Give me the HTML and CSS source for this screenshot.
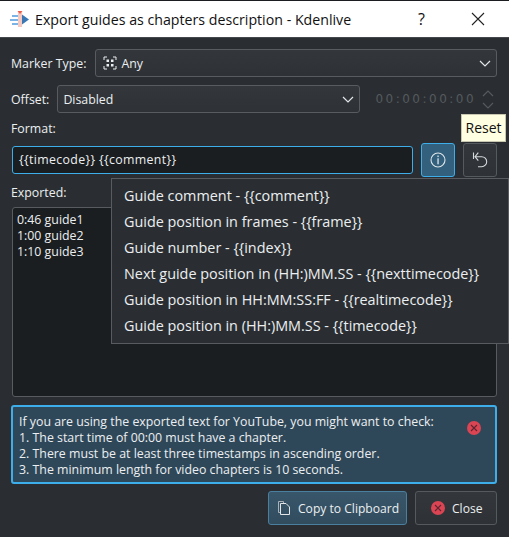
FILE: index.html
```html
<!DOCTYPE html>
<html lang="en">
<head>
    <meta charset="UTF-8">
    <meta name="viewport" content="width=device-width, initial-scale=1.0">
    <title>Export guides as chapters description - Kdenlive</title>
    <link rel="stylesheet" href="styles.css">
</head>
<body>
    <div class="window">
        <header class="titlebar">
            <svg class="app-icon" width="20" height="20" viewBox="0 0 20 20">
                <rect x="2" y="6" width="6" height="2" fill="#7db4e6"/>
                <rect x="0" y="10" width="8" height="2" fill="#7db4e6"/>
                <rect x="2" y="14" width="6" height="2" fill="#7db4e6"/>
                <rect x="8" y="3" width="4" height="15" fill="#f6c9c0"/>
                <path d="M7.500 2h5l-2.500 3z" fill="#e8604c"/>
                <path d="M12 5.500l7 5-7 5z" fill="#3a78b5"/>
            </svg>
            <span class="title">Export guides as chapters description - Kdenlive</span>
            <span class="help">?</span>
            <svg class="close-x" width="14" height="14" viewBox="0 0 14 14">
                <path d="M1 1l12 12M13 1L1 13" stroke="#222" stroke-width="1.1" fill="none"/>
            </svg>
        </header>

        <main class="content">
            <div class="row row-marker">
                <label class="label">Marker Type:</label>
                <div class="combo combo-grow">
                    <svg width="14" height="14" viewBox="0 0 14 14">
                        <path d="M1 4V1h3M10 1h3v3M13 10v3h-3M4 13H1v-3" stroke="#eceff1" fill="none"/>
                        <rect x="3.500" y="3.500" width="2.500" height="2.500" fill="#eceff1"/>
                        <rect x="8" y="3.500" width="2.500" height="2.500" fill="#eceff1"/>
                        <rect x="3.500" y="8" width="2.500" height="2.500" fill="#eceff1"/>
                        <rect x="8" y="8" width="2.500" height="2.500" fill="#eceff1"/>
                    </svg>
                    <span class="combo-text">Any</span>
                    <svg class="chevron" width="12" height="7" viewBox="0 0 12 7">
                        <path d="M1 1l5 5 5-5" stroke="#e4e7e9" stroke-width="1.2" fill="none"/>
                    </svg>
                </div>
            </div>

            <div class="row row-offset">
                <label class="label">Offset:</label>
                <div class="combo combo-offset">
                    <span class="combo-text">Disabled</span>
                    <svg class="chevron" width="12" height="7" viewBox="0 0 12 7">
                        <path d="M1 1l5 5 5-5" stroke="#e4e7e9" stroke-width="1.2" fill="none"/>
                    </svg>
                </div>
                <span class="timecode">00:00:00:00</span>
                <div class="spin">
                    <svg width="12" height="7" viewBox="0 0 12 7"><path d="M1 6l5-5 5 5" stroke="#555a5e" stroke-width="1.2" fill="none"/></svg>
                    <svg width="12" height="7" viewBox="0 0 12 7"><path d="M1 1l5 5 5-5" stroke="#555a5e" stroke-width="1.2" fill="none"/></svg>
                </div>
            </div>

            <div class="format-label label">Format:</div>

            <div class="row row-format">
                <div class="format-input">{{timecode}} {{comment}}</div>
                <button class="icon-btn icon-btn-on">
                    <svg width="18" height="18" viewBox="0 0 18 18">
                        <circle cx="9" cy="9" r="7" stroke="#dfe6ea" stroke-width="1.1" fill="none"/>
                        <rect x="8.400" y="4.500" width="1.300" height="1.600" fill="#dfe6ea"/>
                        <rect x="8.400" y="7.300" width="1.300" height="6" fill="#dfe6ea"/>
                    </svg>
                </button>
                <button class="icon-btn">
                    <svg width="16" height="16" viewBox="0 0 16 16">
                        <path d="M1.500 .5v6.500M6.300 .7L3 4.700l3.300 4M3 4.700h6.700a5 5 0 0 1 0 10H6" stroke="#d5d9dc" stroke-width="1.100" fill="none"/>
                    </svg>
                </button>
            </div>

            <div class="exported-label label">Exported:</div>
            <div class="exported">0:46 guide1<br>1:00 guide2<br>1:10 guide3</div>

            <div class="message">
                <p class="message-text">If you are using the exported text for YouTube, you might want to check:<br>1. The start time of 00:00 must have a chapter.<br>2. There must be at least three timestamps in ascending order.<br>3. The minimum length for video chapters is 10 seconds.</p>
                <svg class="message-close" width="14" height="14" viewBox="0 0 14 14">
                    <circle cx="7" cy="7" r="7" fill="#da4453"/>
                    <path d="M4 4l6 6M10 4l-6 6" stroke="#5b2630" stroke-width="1.1"/>
                </svg>
            </div>

            <div class="actions">
                <button class="btn btn-copy">
                    <svg width="14" height="16" viewBox="0 0 14 16">
                        <path d="M1.500 1.500h5v2M1.500 1.500v11h2" stroke="#a9b2b8" fill="none"/>
                        <path d="M3.500 3.500h5.500l3.500 3.500v7.500h-9z" stroke="#e2e6e8" fill="none"/>
                    </svg>
                    Copy to Clipboard
                </button>
                <button class="btn btn-close">
                    <svg width="14" height="14" viewBox="0 0 14 14">
                        <circle cx="7" cy="7" r="7" fill="#da4453"/>
                        <path d="M4 4l6 6M10 4l-6 6" stroke="#5b2630" stroke-width="1.1"/>
                    </svg>
                    Close
                </button>
            </div>
        </main>

        <div class="tooltip">Reset</div>

        <ul class="menu">
            <li>Guide comment - {{comment}}</li>
            <li>Guide position in frames - {{frame}}</li>
            <li>Guide number - {{index}}</li>
            <li>Next guide position in (HH:)MM.SS - {{nexttimecode}}</li>
            <li>Guide position in HH:MM:SS:FF - {{realtimecode}}</li>
            <li>Guide position in (HH:)MM.SS - {{timecode}}</li>
        </ul>
    </div>
</body>
</html>
```

FILE: styles.css
```css
/* General Styles */
html, body {
    margin: 0;
    padding: 0;
    height: 100%;
    overflow: hidden;
}
body {
    font-family: "Open Sans", "Noto Sans", sans-serif;
    font-size: 12.35px;
    color: #eceff1;
    background-color: #2a2e32;
}
button {
    font: inherit;
    color: inherit;
}

.window {
    position: relative;
    height: 537px;
    box-sizing: border-box;
    border-top: 1px solid #1b1d20;
}

/* Title bar */
.titlebar {
    height: 37px;
    box-sizing: border-box;
    border-bottom: 1px solid #44484c;
    background-color: #fff;
    display: flex;
    align-items: center;
    padding-left: 10px;
    color: #111;
}
.app-icon {
    margin-right: 5px;
}
.title {
    font-size: 14.2px;
    flex: 1;
}
.help {
    font-size: 16px;
    margin-right: 46px;
}
.close-x {
    margin-right: 24px;
}

/* Form */
.content {
    padding: 11px 12px 0 11px;
}
.row {
    display: flex;
    align-items: center;
}
.label {
    white-space: nowrap;
}
.combo {
    height: 28px;
    box-sizing: border-box;
    border: 1px solid #585c60;
    border-radius: 3px;
    background: linear-gradient(#33373b, #2e3236);
    display: flex;
    align-items: center;
    padding: 0 5px 0 7px;
}
.combo-grow {
    flex: 1;
    margin-left: 9px;
}
.combo-offset {
    width: 303px;
    margin-left: 8px;
    padding-left: 5px;
}
.combo-text {
    flex: 1;
    margin-left: 4px;
}
.combo-offset .combo-text {
    margin-left: 0;
}
.row-offset {
    margin-top: 8px;
}
.timecode {
    margin-left: 15px;
    font-family: "DejaVu Sans", sans-serif;
    font-size: 12px;
    letter-spacing: 2.5px;
    color: #555a5e;
}
.spin {
    display: flex;
    flex-direction: column;
    gap: 5px;
    margin-left: 6px;
}

.format-label {
    margin-top: 8px;
    height: 22px;
    line-height: 16px;
}
.row-format {
    margin-left: 1px;
    height: 34px;
    gap: 8px;
}
.format-input {
    width: 401px;
    height: 28px;
    box-sizing: border-box;
    border: 1px solid #3daee9;
    border-radius: 3px;
    background-color: #1b1e20;
    padding-left: 6px;
    line-height: 26px;
    letter-spacing: 0.35px;
}
.icon-btn {
    width: 34px;
    height: 34px;
    padding: 0;
    box-sizing: border-box;
    border: 1px solid #555a5e;
    border-radius: 3px;
    background: linear-gradient(#33373b, #2e3236);
    display: flex;
    align-items: center;
    justify-content: center;
}
.icon-btn-on {
    border-color: #3daee9;
    background: #33607c;
}

.exported-label {
    margin-top: 8px;
    height: 22px;
    line-height: 16px;
}
.exported {
    margin-left: 1px;
    height: 190px;
    box-sizing: border-box;
    border: 1px solid #585c60;
    border-radius: 3px;
    background-color: #1b1e20;
    padding: 4px;
    line-height: 16px;
}

/* Message box */
.message {
    margin-top: 8px;
    height: 79px;
    box-sizing: border-box;
    border: 2px solid #3daee9;
    border-radius: 3px;
    background-color: #2f4859;
    display: flex;
    align-items: flex-start;
    padding: 7px 14px 0 6px;
}
.message-text {
    margin: 0;
    flex: 1;
    line-height: 16px;
}
.message-close {
    margin-top: 7px;
}

/* Buttons */
.actions {
    margin-top: 7px;
    display: flex;
    justify-content: flex-end;
    gap: 8px;
}
.btn {
    height: 34px;
    box-sizing: border-box;
    border: 1px solid #555a5e;
    border-radius: 3px;
    background: linear-gradient(#33373b, #2e3236);
    display: flex;
    align-items: center;
    gap: 7px;
    padding: 0;
    font-size: 12.1px;
}
.btn-copy {
    width: 139px;
    padding-left: 8px;
    border-color: #4b7f9f;
    background: linear-gradient(#38566a, #324c5e);
}
.btn-close {
    width: 82px;
    padding-left: 15px;
}

/* Popups */
.tooltip {
    position: absolute;
    left: 461px;
    top: 113px;
    width: 45px;
    height: 28px;
    box-sizing: border-box;
    border: 1px solid #c8c8b0;
    background-color: #ffffe1;
    color: #111;
    font-size: 14px;
    line-height: 26px;
    text-align: center;
}
.menu {
    position: absolute;
    left: 111px;
    top: 177px;
    width: 398px;
    margin: 0;
    padding: 4px 0;
    box-sizing: border-box;
    list-style: none;
    border: 1px solid #585c60;
    background-color: #2a2e32;
    font-size: 14.4px;
}
.menu li {
    height: 26px;
    line-height: 25px;
    padding-left: 12px;
    white-space: nowrap;
}
```
